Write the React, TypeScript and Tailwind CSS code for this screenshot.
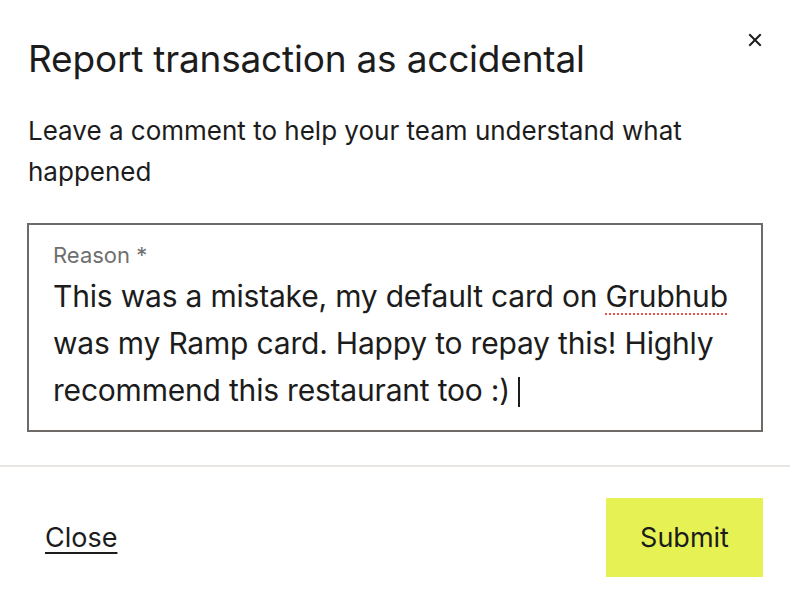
import React from "react";

export default function App() {
  return (
    <div
      className="relative w-[790px] h-[608px] bg-white text-[#1c1c1c] overflow-hidden"
      style={{ fontFamily: "Inter, 'Liberation Sans', sans-serif" }}
    >
      <button className="absolute left-[746px] top-[31px] w-[18px] h-[18px] flex items-center justify-center text-[#1c1c1c]" aria-label="Close">
        <svg width="14" height="14" viewBox="0 0 14 14" fill="none" stroke="currentColor" strokeWidth="2" strokeLinecap="square">
          <path d="M2 2 L12 12 M12 2 L2 12" />
        </svg>
      </button>
      <div className="px-[28px] pt-[37px]">
        <h1 className="text-[37px] leading-[44px] font-normal tracking-[-0.2px]">Report transaction as accidental</h1>
        <p className="mt-[29px] text-[26px] leading-[41px] pr-[60px]">
          Leave a comment to help your team understand what happened
        </p>
      </div>
      <div className="mx-[27px] mt-[31px] h-[209px] border-2 border-[#6e6a67] px-[24px] pt-[15px]">
        <div className="text-[22px] leading-[30px] text-[#6f6f6f]">Reason *</div>
        <div className="mt-[3px] text-[30px] leading-[47px] tracking-[-0.2px]">
          This was a mistake, my default card on{" "}
          <span className="underline decoration-dotted decoration-[#e5534b] decoration-2 underline-offset-[6px]">Grubhub</span>{" "}
          was my Ramp card. Happy to repay this! Highly recommend this restaurant too :)
          <span className="inline-block w-[2px] h-[30px] bg-[#1c1c1c] align-[-6px] ml-[8px]" />
        </div>
      </div>
      <div className="mt-[33px] h-[2px] bg-[#e8e5e2]" />
      <div className="flex items-center justify-between pl-[45px] pr-[27px] pt-[31px]">
        <button className="text-[27px] leading-[34px] underline underline-offset-[5px] decoration-2">Close</button>
        <button className="w-[157px] h-[79px] bg-[#e6f253] text-[27px] leading-[34px]">Submit</button>
      </div>
    </div>
  );
}
